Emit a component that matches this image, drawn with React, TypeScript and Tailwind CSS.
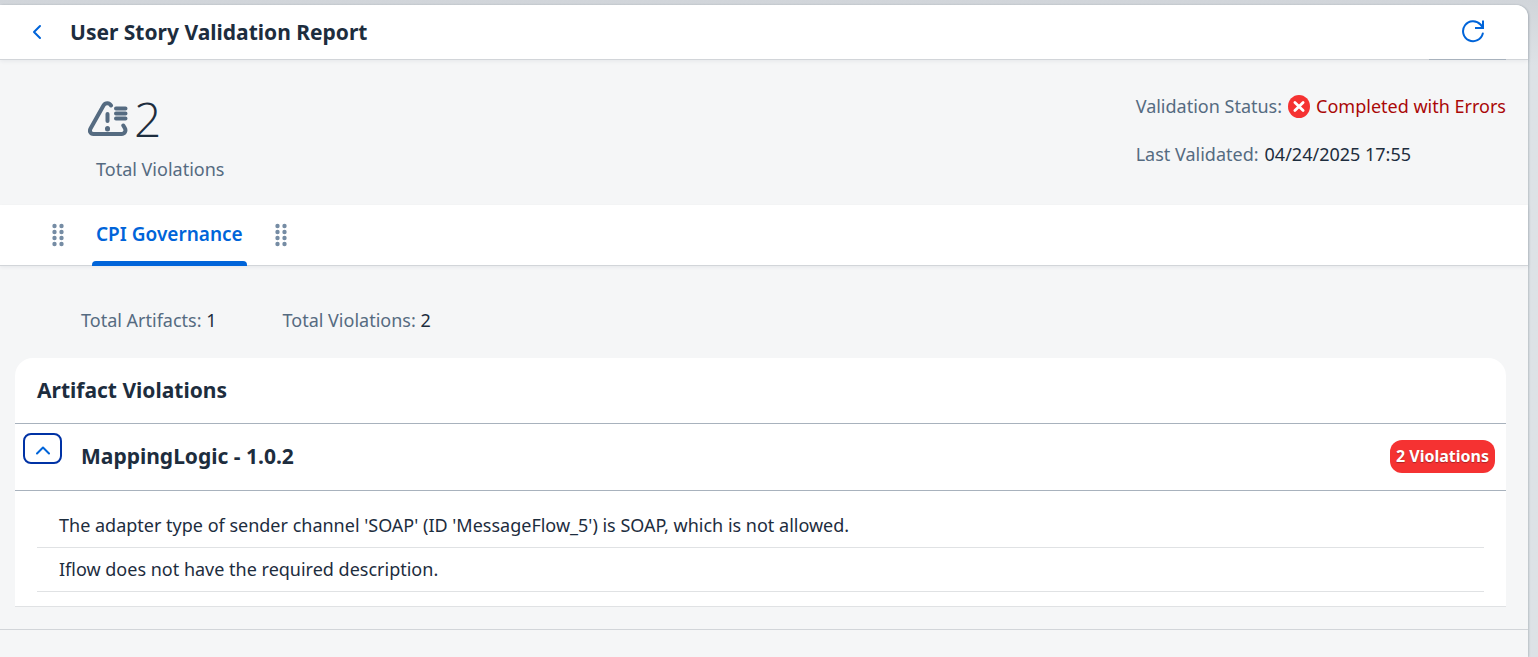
import React from "react";

const messages = [
  "The adapter type of sender channel 'SOAP' (ID 'MessageFlow_5') is SOAP, which is not allowed.",
  "Iflow does not have the required description.",
];

function BackIcon() {
  return (
    <svg width="10" height="16" viewBox="0 0 10 16" fill="none" stroke="#0064d9" strokeWidth="2" strokeLinecap="round" strokeLinejoin="round" aria-hidden="true">
      <path d="M8 2 2 8l6 6" />
    </svg>
  );
}

function RefreshIcon() {
  return (
    <svg width="24" height="24" viewBox="0 0 24 24" fill="none" stroke="#0064d9" strokeWidth="2" strokeLinecap="round" strokeLinejoin="round" aria-hidden="true">
      <path d="M21.800 14.500A10 10 0 1 1 19.500 5.500L22 8.500" />
      <path d="M22 1.500v7.500h-8" strokeLinecap="butt" strokeLinejoin="miter" />
    </svg>
  );
}

function WarningListIcon() {
  return (
    <svg width="40" height="36" viewBox="0 0 40 36" fill="none" stroke="#556b81" strokeWidth="4" strokeLinecap="round" strokeLinejoin="round" aria-hidden="true">
      <path d="M23 4.500C21.500 1.800 17.500 1.300 15.500 4.500L2.700 27.300C1 30.200 2.300 33 5.500 33H33.500C37 33 38.300 29.600 36.800 27L35.300 24.500" />
      <path d="M19.500 13v7" />
      <path d="M19.500 27.500v.5" strokeWidth="5" />
      <path d="M28 17.500h9.500M28 12.500h9.500M28 7.500h9.500" strokeWidth="4" />
    </svg>
  );
}

function ErrorIcon() {
  return (
    <svg width="22" height="24" viewBox="0 0 22 24" aria-hidden="true">
      <ellipse cx="11" cy="12.500" rx="11" ry="11.500" fill="#f53232" />
      <path d="M6.900 8.400l8.200 8.200M15.100 8.400l-8.200 8.200" stroke="#fff" strokeWidth="2.800" strokeLinecap="round" />
    </svg>
  );
}

function GripIcon() {
  return (
    <svg width="12" height="24" viewBox="0 0 12 24" fill="#758ca4" aria-hidden="true">
      {[3, 9, 15, 21].map((y) => (
        <React.Fragment key={y}>
          <circle cx="2.500" cy={y} r="2.200" />
          <circle cx="9.500" cy={y} r="2.200" />
        </React.Fragment>
      ))}
    </svg>
  );
}

function Header() {
  return (
    <header className="relative z-10 flex h-[54px] items-center rounded-tr-xl bg-white pr-[43px] pl-8 shadow-[0_1px_0_#d2d5d9,0_2px_4px_#22354814]">
      <button type="button" aria-label="Back" className="flex w-[38px] items-center">
        <BackIcon />
      </button>
      <h1 className="text-[21px] leading-7 font-bold">User Story Validation Report</h1>
      <button type="button" aria-label="Refresh" className="mb-[2px] ml-auto">
        <RefreshIcon />
      </button>
      <div className="absolute right-[22px] -bottom-px h-px w-[77px] bg-[#a8b2bd]" />
    </header>
  );
}

function Summary() {
  return (
    <section className="flex items-start justify-between pt-8 pr-[22px] pb-[22px] pl-[88px] text-lg leading-7">
      <div>
        <div className="flex h-14 items-center gap-[6px]">
          <WarningListIcon />
          <span className="font-['Open_Sans','Noto_Sans',sans-serif] text-5xl font-light">2</span>
        </div>
        <p className="mt-2 pl-2 text-[#556b81]">Total Violations</p>
      </div>
      <dl className="flex flex-col gap-5 pt-px">
        <div className="flex gap-[6px]">
          <dt className="text-[#556b81]">Validation Status:</dt>
          <dd className="flex items-center gap-[6px] text-[#aa0808]">
            <ErrorIcon />
            Completed with Errors
          </dd>
        </div>
        <div className="flex gap-[6px]">
          <dt className="text-[#556b81]">Last Validated:</dt>
          <dd>04/24/2025 17:55</dd>
        </div>
      </dl>
    </section>
  );
}

function Tabs() {
  return (
    <nav className="relative flex h-[60px] items-stretch gap-7 bg-white pl-[52px] shadow-[0_1px_0_#d2d5d9,0_2px_4px_#22354814]">
      <span className="flex items-center"><GripIcon /></span>
      <button type="button" className="relative flex items-center px-1 pb-[2px] text-[19px] font-semibold text-[#0064d9]">
        CPI Governance
        <span className="absolute inset-x-0 -bottom-px h-[5px] rounded-t bg-[#0064d9]" />
      </button>
      <span className="flex items-center"><GripIcon /></span>
    </nav>
  );
}

function ArtifactPanel() {
  return (
    <section className="mr-[22px] ml-[15px] rounded-t-[18px] border-b border-[#e0e2e4] bg-white">
      <h2 className="border-b border-[#a8b2bd] px-[22px] pt-[18px] pb-[19px] text-[21px] leading-7 font-bold">Artifact Violations</h2>
      <div className="flex h-[67px] items-center border-b border-[#a8b2bd] pr-[11px] pb-[2px] pl-2">
        <button type="button" aria-label="Collapse MappingLogic" aria-expanded="true" className="mt-[9px] flex h-[31px] w-[39px] items-center justify-center self-start rounded-lg border-2 border-[#0032a5] pt-[3px]">
          <svg width="14" height="9" viewBox="0 0 14 9" fill="none" stroke="#0064d9" strokeWidth="2" strokeLinecap="round" strokeLinejoin="round" aria-hidden="true">
            <path d="M1 7.500l6-6 6 6" />
          </svg>
        </button>
        <h3 className="ml-[19px] text-[21px] leading-7 font-bold">MappingLogic - 1.0.2</h3>
        <span className="ml-auto flex h-[33px] items-center rounded-xl bg-[#f53232] px-[6px] text-base font-bold text-white [text-shadow:0_1px_1px_#00000050]">2 Violations</span>
      </div>
      <ul className="mx-[22px] pt-[13px] pb-[14px] text-lg leading-[43px]">
        {messages.map((message) => (
          <li key={message} className="border-b border-[#e0e2e4] px-[22px]">{message}</li>
        ))}
      </ul>
    </section>
  );
}

export default function App() {
  return (
    <div className="flex min-h-screen flex-col bg-gradient-to-b from-[#d1d5da] to-[#dde2e6] to-10% pt-[5px] pr-[10px] font-['Noto_Sans',sans-serif] text-[#1d2d3e]">
      <main className="flex grow flex-col rounded-tr-xl bg-[#f5f6f7] shadow-[1px_0_2px_#22354833]">
        <Header />
        <Summary />
        <Tabs />
        <div className="flex gap-[66px] pt-[41px] pb-6 pl-[81px] text-lg leading-7">
          <p><span className="text-[#556b81]">Total Artifacts:</span> 1</p>
          <p><span className="text-[#556b81]">Total Violations:</span> 2</p>
        </div>
        <ArtifactPanel />
        <footer className="mt-[22px] border-t border-[#d2d5d9]" />
      </main>
    </div>
  );
}
